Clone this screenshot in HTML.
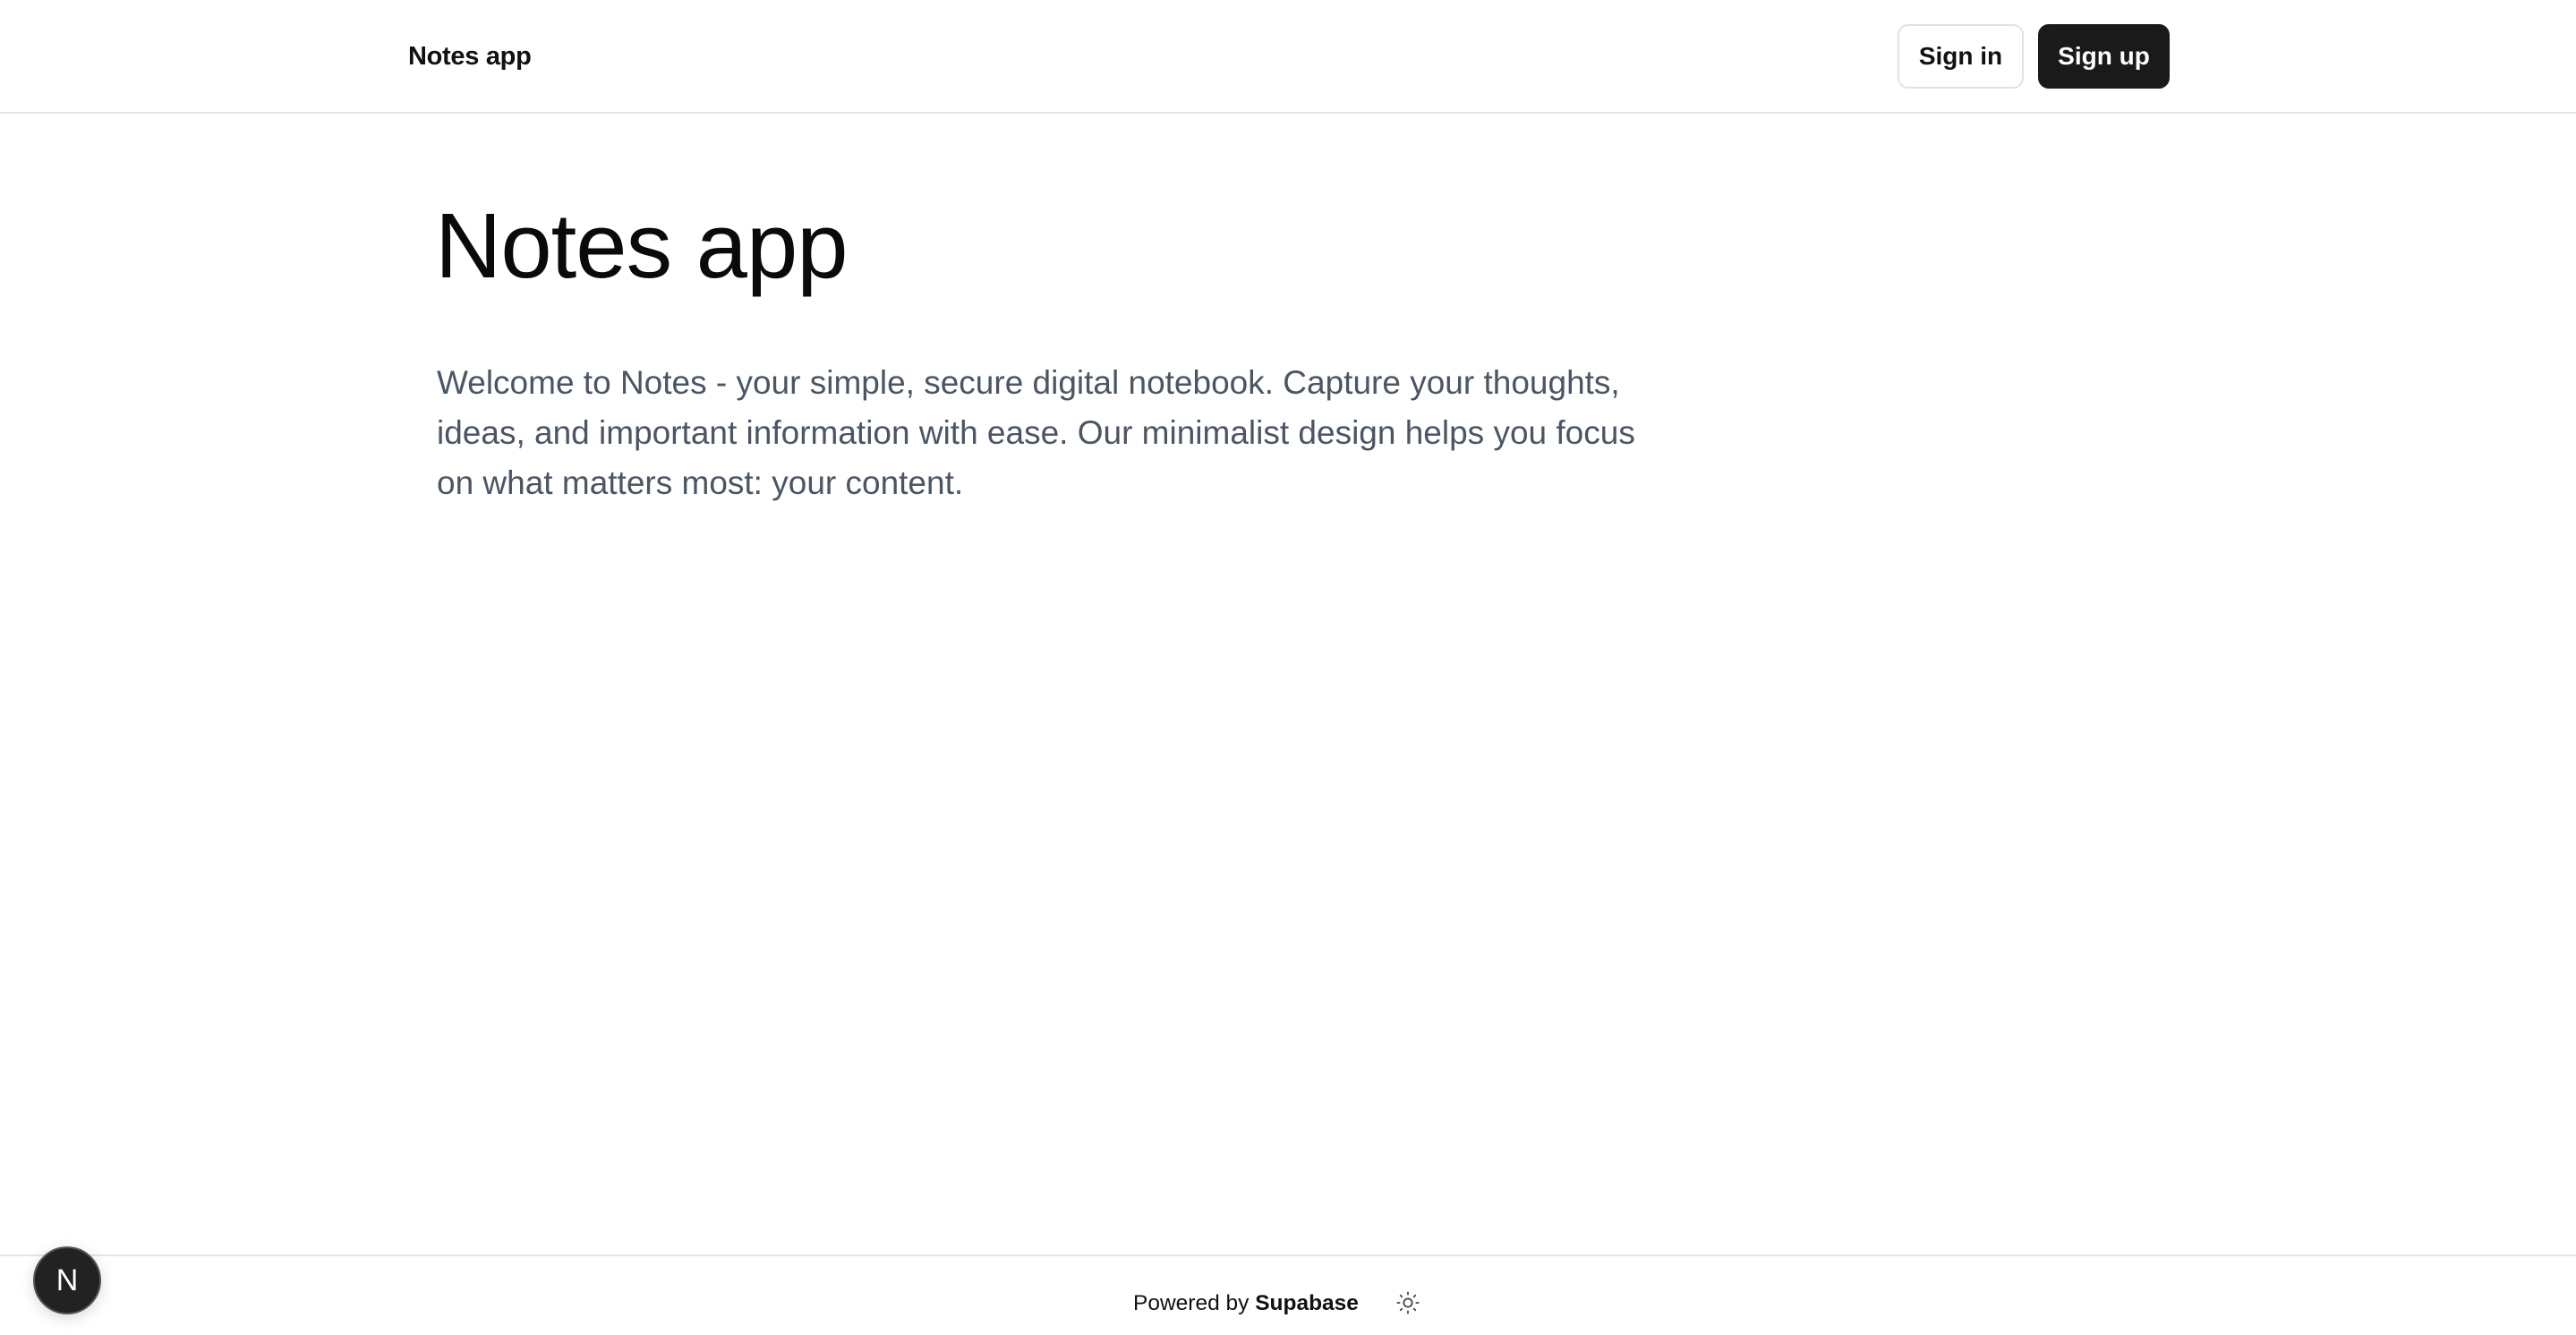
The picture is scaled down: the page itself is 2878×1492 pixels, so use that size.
<!DOCTYPE html>
<html><head><meta charset="utf-8"><style>
*{margin:0;padding:0;box-sizing:border-box}
body{width:2878px;height:1492px;background:#fff;font-family:"Liberation Sans",sans-serif;position:relative;overflow:hidden;color:#111}
.hdr{position:absolute;left:0;top:0;width:2878px;height:127px;border-bottom:2px solid #e5e5e5}
.logo{position:absolute;left:456px;top:47px;font-size:29px;font-weight:bold;letter-spacing:-0.3px}
.btn{position:absolute;top:27px;height:72px;border-radius:12px;font-size:28px;font-weight:bold;display:flex;align-items:center;justify-content:center}
.in{left:2120px;width:141px;border:2px solid #e2e2e2;color:#111}
.up{left:2277px;width:147px;background:#1a1a1a;color:#fff}
h1{position:absolute;left:486px;top:220px;font-size:103px;font-weight:normal;letter-spacing:-1px;line-height:110px;color:#0a0a0a}
p{position:absolute;left:488px;top:400px;font-size:37px;line-height:56px;color:#4b5563;white-space:nowrap}
.ftr{position:absolute;left:0;top:1402px;width:2878px;height:90px;border-top:2px solid #e5e5e5}
.pw{position:absolute;left:1266px;top:1443px;font-size:24.5px;color:#111}
.sun{position:absolute;left:1559px;top:1442px}
.n{position:absolute;left:37px;top:1393px;width:76px;height:76px;border-radius:50%;background:#222;border:2px solid #555;color:#fff;font-size:34px;display:flex;align-items:center;justify-content:center;box-shadow:0 4px 16px rgba(0,0,0,.15)}
</style></head><body>
<div class="hdr"><div class="logo">Notes app</div>
<div class="btn in">Sign in</div><div class="btn up">Sign up</div></div>
<h1>Notes app</h1>
<p>Welcome to Notes - your simple, secure digital notebook. Capture your thoughts,<br>ideas, and important information with ease. Our minimalist design helps you focus<br>on what matters most: your content.</p>
<div class="ftr"></div>
<div class="pw">Powered by <b>Supabase</b></div>
<svg class="sun" width="28" height="28" viewBox="0 0 24 24" fill="none" stroke="#444" stroke-width="1.5" stroke-linecap="round"><circle cx="12" cy="12" r="4"/><path d="M12 2v2M12 20v2M4.9 4.9l1.4 1.4M17.7 17.7l1.4 1.4M2 12h2M20 12h2M6.3 17.7l-1.4 1.4M19.1 4.9l-1.4 1.4"/></svg>
<div class="n">N</div>
</body></html>
